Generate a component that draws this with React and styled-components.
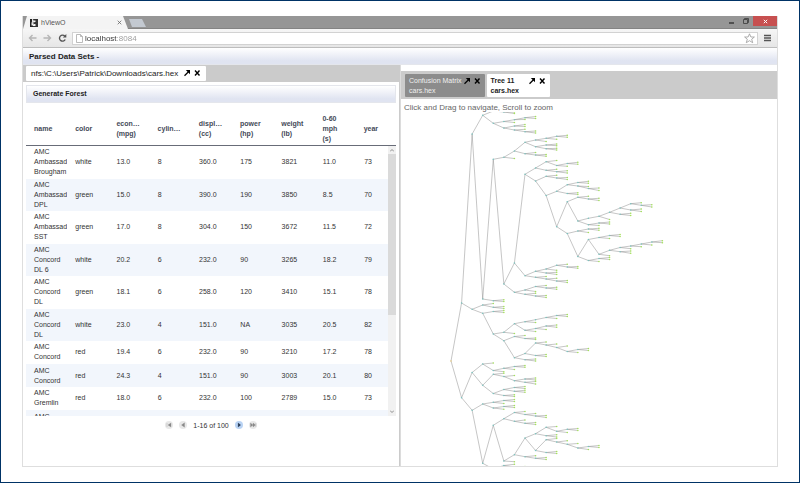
import React from 'react';
import styled, { createGlobalStyle, css } from 'styled-components';

const GlobalStyle = createGlobalStyle`
  * { box-sizing: border-box; }
  body { margin: 0; background: #fff; }
  body, button, input { font-family: 'Liberation Sans', Arial, sans-serif; }
  button { border: 0; padding: 0; margin: 0; background: none; color: inherit; }
  h2, p { margin: 0; }
`;

const Frame = styled.div`
  height: 100vh;
  border: 1px solid #003366;
  padding: 15px 21px;
  display: flex;
  background: #fff;
`;

const Browser = styled.div`
  flex: 1;
  min-width: 0;
  display: flex;
  flex-direction: column;
  border: 1px solid #dedede;
  border-top: 0;
`;

const TitleBar = styled.header`
  height: 13px;
  flex: none;
  display: flex;
  background: #969696;
  border-bottom: 1px solid #848484;
`;

const BrowserTab = styled.div`
  width: 105px;
  height: 13px;
  display: flex;
  align-items: center;
  gap: 3px;
  padding: 0 6px 0 7px;
  background: #f4f4f4;
  clip-path: polygon(0 100%, 4px 0, 100px 0, 100% 100%);
  font-size: 7px;
  color: #555;
`;

const TabTitle = styled.span`
  flex: 1;
  line-height: 12px;
`;

const NewTab = styled.button`
  width: 17px;
  height: 8px;
  margin: 3px 0 0 1px;
  background: #c3c9d1;
  clip-path: polygon(0 0, 13px 0, 100% 100%, 3px 100%);
`;

const WindowButtons = styled.div`
  margin-left: auto;
  display: flex;
  height: 10px;
`;

const WindowButton = styled.button`
  width: ${(p) => (p.$close ? 24 : 14)}px;
  display: grid;
  place-items: center;
  background: ${(p) => (p.$close ? '#c75050' : 'transparent')};
`;

const AddressRow = styled.div`
  height: 19px;
  flex: none;
  display: flex;
  align-items: center;
  gap: 5px;
  padding: 0 4px;
  background: linear-gradient(#f6f6f6, #e6e6e6);
  border-bottom: 1px solid #bdbdbd;
`;

const NavButton = styled.button`
  width: 10px;
  height: 10px;
  display: grid;
  place-items: center;
`;

const AddressBox = styled.div`
  flex: 1;
  height: 13px;
  display: flex;
  align-items: center;
  gap: 2px;
  padding: 0 2px 0 3px;
  background: #fff;
  border: 1px solid #d2d2d2;
`;

const Address = styled.input`
  flex: 1;
  min-width: 0;
  height: 11px;
  padding: 0;
  border: 0;
  outline: 0;
  font-size: 8px;
  line-height: 11px;
  color: transparent;
  background: linear-gradient(90deg, #333 32px, #999 32px);
  background-clip: text;
`;

const Bar = styled.div`
  height: 17px;
  flex: none;
  padding-left: 6px;
  font-size: 8px;
  line-height: 17px;
  font-weight: bold;
  color: #222;
  background: linear-gradient(#fff, #e0e4f1 80%);
  border: solid #e4e6ec;
  border-width: 0 0 1px;
  ${(p) => p.$boxed && css`
    height: 18px;
    border-width: 1px;
    line-height: 16px;
    font-size: 7px;
  `}
`;

const BarButton = styled.button`
  font: inherit;
`;

const Panels = styled.main`
  flex: 1;
  min-height: 0;
  display: grid;
  grid-template-columns: 1fr 1fr;
`;

const LeftPanel = styled.section`
  min-width: 0;
  min-height: 0;
  border-right: 1px solid #cbcbcb;
`;

const RightPanel = styled.section`
  min-width: 0;
  min-height: 0;
  display: flex;
  flex-direction: column;
  padding-top: 6px;
  border-left: 1px solid #dcdcdc;
`;

const TabStrip = styled.div`
  flex: none;
  display: flex;
  gap: 2px;
  background: #cbcbcb;
  padding: ${(p) => (p.$tall ? '3px 4px 2px' : '1px 3px')};
`;

const DataTab = styled.div`
  height: ${(p) => (p.$tall ? 23 : 15)}px;
  display: flex;
  align-items: flex-start;
  gap: ${(p) => p.$gap || 1}px;
  padding: ${(p) => (p.$tall ? '2px 4px' : '2px 5px')};
  border-radius: 1px;
  font-size: ${(p) => (p.$tall ? 7 : 8)}px;
  line-height: ${(p) => (p.$tall ? 10 : 11)}px;
  background: ${(p) => (p.$inactive ? '#8c8c8c' : '#fff')};
  color: ${(p) => (p.$inactive ? '#f0f0f0' : '#222')};
  white-space: pre-line;
`;

const TabActions = styled.div`
  display: flex;
  gap: 2px;
  color: #000;
  padding-top: 1px;
`;

const IconButton = styled.button`
  display: block;
  width: 8px;
  height: 8px;
  svg { display: block; }
`;

const Forest = styled.div`
  margin: 3px 3px 0;
`;

const Table = styled.table`
  width: 100%;
  table-layout: fixed;
  border-collapse: collapse;
  font-size: 7px;
  line-height: 10px;
  color: #333;
`;

const Column = styled.col`
  width: ${(p) => (p.$last ? 'auto' : '11.14%')};
`;

const BodyColumn = styled(Column)`
  width: ${(p) => (p.$last ? 'auto' : '11.4%')};
`;

const HeadCell = styled.th`
  height: 42px;
  padding: 9px 0 0 8px;
  text-align: left;
  vertical-align: middle;
  white-space: pre-line;
  overflow: hidden;
  color: #444a58;
`;

const HeadRule = styled.div`
  border-bottom: 1px solid #686c78;
`;

const BodyArea = styled.div`
  height: 270px;
  display: flex;
  overflow: hidden;
`;

const BodyRows = styled.div`
  flex: 1;
  height: 100%;
  overflow: hidden;
`;

const Row = styled.tr`
  &:nth-child(even) { background: #f2f6fc; }
  &:nth-child(even) td { padding-bottom: 1px; }
`;

const Cell = styled.td`
  height: 23px;
  padding: 1px 0 2px 8px;
  overflow: hidden;
  white-space: pre-line;
  vertical-align: middle;
`;

const ScrollTrack = styled.div`
  width: 8px;
  display: flex;
  flex-direction: column;
  align-items: center;
  justify-content: space-between;
  background: #f1f1f1;
  padding: 3px 0;
`;

const ScrollThumb = styled.div`
  width: 8px;
  height: 161px;
  margin: 2px 0 auto;
  background: #dadada;
`;

const Pager = styled.nav`
  display: flex;
  align-items: center;
  justify-content: center;
  gap: 6px;
  height: 18px;
  font-size: 7px;
  color: #333;
`;

const PageButton = styled.button`
  width: 8px;
  height: 8px;
  border-radius: 50%;
  display: grid;
  place-items: center;
  background: ${(p) => (p.$active ? '#b9d3f4' : '#e8e8e8')};
  color: ${(p) => (p.$active ? '#1c2c44' : '#888')};
`;

const Hint = styled.p`
  padding: 4px 3px 0;
  font-size: 8px;
  line-height: 9px;
  color: #666;
`;

const Canvas = styled.div`
  flex: 1;
  min-height: 0;
  overflow: hidden;
  svg { display: block; }
`;

const columns = ['name', 'color', 'econ…\n(mpg)', 'cylin…', 'displ…\n(cc)', 'power\n(hp)', 'weight\n(lb)', '0-60\nmph\n(s)', 'year'];

const cars = [
  ['AMC\nAmbassador\nBrougham', 'white', '13.0', '8', '360.0', '175', '3821', '11.0', '73'],
  ['AMC\nAmbassador\nDPL', 'green', '15.0', '8', '390.0', '190', '3850', '8.5', '70'],
  ['AMC\nAmbassador\nSST', 'green', '17.0', '8', '304.0', '150', '3672', '11.5', '72'],
  ['AMC\nConcord\nDL 6', 'white', '20.2', '6', '232.0', '90', '3265', '18.2', '79'],
  ['AMC\nConcord\nDL', 'green', '18.1', '6', '258.0', '120', '3410', '15.1', '78'],
  ['AMC\nConcord\nDL', 'white', '23.0', '4', '151.0', 'NA', '3035', '20.5', '82'],
  ['AMC\nConcord', 'red', '19.4', '6', '232.0', '90', '3210', '17.2', '78'],
  ['AMC\nConcord', 'red', '24.3', '4', '151.0', '90', '3003', '20.1', '80'],
  ['AMC\nGremlin', 'red', '18.0', '6', '232.0', '100', '2789', '15.0', '73'],
  ['AMC\nGremlin', '', '', '', '', '', '', '', ''],
];

// Each branch is [y, ...children]; a bare number is a leaf. Depth gives x.
const tree = [361,
  [303,
    [134,
      [115.3, [111, [112, 112, 113.5]],
        [123.3, [121.5, [119.7, [117.7, 116.5, 118.5], 119.5], 122.5],
          [128, [126, 124.5, 126.5], [130, 129.3, [131.7, 131, 133]]]]],
      [299,
        [159.3,
          [157.3,
            [151,
              [142.3, [140, [138.3, [136.3, 135.3, 137.3], 139.3], 141.5], [146.7, [145, 144, 145.7], [148.7, 148.3, 150]]],
              [153.7, 152.5, [155, 154.5, 156.3]]],
            158.5],
          [284,
            [263,
              [174.3,
                [168, [161.7, 160.5, [165.5, [163.5, 162.3, 164.3], 166.3]], [170.3, 169.3, [171.7, 170.7, 173]]],
                [181, [176.3, 175.3, [178, 177.5, 179.5]],
                  [195.5,
                    [191.3, [184.7, [182.5, 181.3, 183.3], [186, 186.5, [188.5, 188, 190.5]]], [193.5, 192.7, 194.5]],
                    [226.7,
                      [201.7, [197.3, 196.3, [199, 198.3, 200.5]],
                        [221,
                          [218.3, [216.3, [212.3, [208, [203.7, 202.7, [205.3, 204.7, 207]], [210, 209, 211.5]], [214.3, 213.3, 215.5]], 219.5]],
                          [224.7, [223, 222, 224], 225.5]]],
                      [233.5, [231, [229, 228.3, 230.3], 232.5],
                        [256.5,
                          [239.5, [237.5, [235.5, 234.5, 236.5], 238.5],
                            [254.3,
                              [250.3, [247.5, [246, [244, [242, 240.7, 242.7], 245], 246.7], 248.7], [251.7, 251, 253.3]],
                              255.7]],
                          [260.5, [258.5, 257.5, 259.5], 261.5]]]]]]],
              [275.7,
                [271.3, [269, [265.3, 264.3, [267, 266.5, 268.3]], 270.3], [273, 272.3, 274.5]],
                [277.3, 276.5, [279, 278.3, [281, 280.5, 282.5]]]]],
            [292.3, [290, [286.5, 285.5, [288, 287.3, 289.3]], 291.5], [294.3, 293.3, [296, 295.5, 297.5]]]]],
        [300.7, 299.7, 301.5]]],
    [309.3, [305, 303.5, [307.3, 306.5, 308.5]],
      [313.3, [311.5, 310.5, 312.5],
        [334,
          [332.3,
            [323.7, [321.7, [319.7, [317.5, [315.5, 314.5, 316.5], 318.5]], 322.5], [330.3, [328.5, [326, 325, 327.3], 329.5], 331.5]],
            333.5],
          [340.7, [336.5, 335.5, [338.5, 338, 339.5]],
            [357.7,
              [353.5, [343, 342, [345, 344, [347.5, 346, [351.5, [349.5, 348.5, 350.5], 352.5]]]], [355.5, 354.5, 356.5]],
              [359.7, 359, 361]]]]]]],
  [397.7,
    [372.5, [364, 363, [370.5, [368.3, [366.5, 365.5, 367.3], 369.5], 371.7]],
      [385.3,
        [374.3, 373.3, [376.5, 375.5, [380.7, [379, 378, 380], [382.3, 381.5, 384]]]],
        [393.5, [389.5, [387.5, 386.5, 388.5], [391.3, 390.3, 392.3]], [395.5, 394.7, 396.5]]]],
    [410.3, [404, [402.3, [400.5, 399.5, 401.5], 403.5], [408, [406.5, 405.5, 407.5], 409.3]],
      [463.3,
        [425.3,
          [418.7, [412.5, 411.5, [414.5, 413.5, [416, 415.5, 417.5]]], [421.3, 420, [423.3, 422.5, 424.5]]],
          [461,
            [454.7,
              [438,
                [433.7, [427.3, 426.5, [431.3, [429.3, 428.5, 430.5], 432.5]], [435.7, 434.7, 437]],
                [450.5, [439.7, 438.5, [442, 440.7, [444.3, 443.5, [448, [446.5, 445.5, 447.5], 449.5]]]], [452.5, 451.5, 453.5]]],
              [456.7, 455.7, [458.3, 457.5, 459.5]]],
            461.7]],
        [469, [465.5, 464.3, [467, 466.5, 468]], 472]]]],
];

const STEP = 10.57;

function collect(node, depth, out) {
  const leaf = typeof node === 'number';
  const y = (leaf ? node : node[0]) - 112;
  const x = 50 + depth * STEP;
  out.nodes.push({ x, y, kind: leaf ? 'leaf' : depth ? 'branch' : 'root' });
  if (!leaf) {
    node.slice(1).forEach((child) => {
      const cy = (typeof child === 'number' ? child : child[0]) - 112;
      out.edges.push(`M${x} ${y}L${x + STEP} ${cy}`);
      collect(child, depth + 1, out);
    });
  }
  return out;
}

const drawing = collect(tree, 0, { nodes: [], edges: [] });
const dotColor = { leaf: '#a4e25c', branch: '#7cc4c0', root: '#e8c87c' };

function TreeDrawing() {
  return (
    <svg width="377" height="356" role="img" aria-label="Decision tree">
      <path d={drawing.edges.join('')} fill="none" stroke="#8d8d8d" strokeWidth="0.5" />
      {drawing.nodes.map((n, i) => (
        <circle key={i} cx={n.x} cy={n.y} r="0.8" fill={dotColor[n.kind]} />
      ))}
    </svg>
  );
}

function Actions() {
  return (
    <TabActions>
      <IconButton aria-label="Open">
        <svg width="8" height="8" viewBox="0 0 8 8"><path d="M1.5 6.8 5.5 2.8" stroke="currentColor" strokeWidth="1.3" /><path d="M2.8 1H7v4.2z" fill="currentColor" /></svg>
      </IconButton>
      <IconButton aria-label="Close">
        <svg width="8" height="8" viewBox="0 0 8 8"><path d="M2 1.5 6.5 6.5M6.5 1.5 2 6.5" stroke="currentColor" strokeWidth="1.4" /></svg>
      </IconButton>
    </TabActions>
  );
}

const pageIcons = {
  First: 'M2 2v4M6 2 3 4l3 2z',
  Previous: 'M5.5 1.8 2.5 4l3 2.2z',
  Next: 'M3.2 2 5.6 4 3.2 6z',
  Last: 'M1.5 2 4 4 1.5 6zM4 2l2.5 2L4 6zM6.8 2v4',
};

function PageControl({ name, active }) {
  return (
    <PageButton $active={active} aria-label={name}>
      <svg width="8" height="8" viewBox="0 0 8 8"><path d={pageIcons[name]} fill="currentColor" stroke="currentColor" strokeWidth="0.3" /></svg>
    </PageButton>
  );
}

export default function App() {
  return (
    <Frame>
      <GlobalStyle />
      <Browser>
        <TitleBar>
          <BrowserTab>
            <svg width="8" height="8" viewBox="0 0 8 8"><path d="M0 0h2v2.5L1.5 4v2.5H3V8H0z" fill="#222" /><path d="M3 0h5v8H3V7h2.5V5H3.5L3 3.5 5.5 3V1.5H3z" fill="#333" /><path d="M2 .5 3.5 1 2.5 4 4 6" stroke="#bbb" strokeWidth=".7" fill="none" /></svg>
            <TabTitle>hViewO</TabTitle>
            <svg width="5" height="5" viewBox="0 0 5 5"><path d="M.7.7l3.6 3.6M4.3.7.7 4.3" stroke="#666" strokeWidth=".8" /></svg>
          </BrowserTab>
          <NewTab aria-label="New tab" />
          <WindowButtons>
            <WindowButton aria-label="Minimize"><svg width="6" height="6"><path d="M0 5h5" stroke="#222" strokeWidth="1.2" /></svg></WindowButton>
            <WindowButton aria-label="Restore"><svg width="6" height="6"><path d="M1.5 1.5V.5h4v4h-1M.5 1.5h4v4h-4z" fill="none" stroke="#444" strokeWidth=".9" /></svg></WindowButton>
            <WindowButton $close aria-label="Close window"><svg width="5" height="5"><path d="M.8.8l3.4 3.4M4.2.8.8 4.2" stroke="#fff" /></svg></WindowButton>
          </WindowButtons>
        </TitleBar>
        <AddressRow>
          <NavButton aria-label="Back"><svg width="9" height="8"><path d="M8.5 4H1.5M4.5 1 1.5 4l3 3" fill="none" stroke="#b5b5b5" strokeWidth="1.4" /></svg></NavButton>
          <NavButton aria-label="Forward"><svg width="9" height="8"><path d="M.5 4h7M4.5 1l3 3-3 3" fill="none" stroke="#b5b5b5" strokeWidth="1.4" /></svg></NavButton>
          <NavButton aria-label="Reload"><svg width="9" height="8"><path d="M6.8 2.2A3 3 0 1 0 7.2 5.5" fill="none" stroke="#555" strokeWidth="1.4" /><path d="M8.3 0v3.6H4.8z" fill="#555" /></svg></NavButton>
          <AddressBox>
            <svg width="7" height="9"><path d="M.5.5h4l2 2v6h-6zM4.5.5v2h2" fill="none" stroke="#aaa" strokeWidth=".8" /></svg>
            <Address type="text" aria-label="Address" defaultValue="localhost:8084" />
            <svg width="11" height="11" viewBox="0 0 11 11"><path d="M5.5.8 6.9 4h3.5L7.7 6.2l1 3.5-3.2-2-3.2 2 1-3.500L.6 4h3.500z" fill="#fff" stroke="#999" strokeWidth=".8" /></svg>
          </AddressBox>
          <NavButton aria-label="Menu"><svg width="8" height="8"><path d="M0 1.5h7M0 4h7M0 6.500h7" stroke="#555" strokeWidth="1.5" /></svg></NavButton>
        </AddressRow>
        <Bar><BarButton>Parsed Data Sets -</BarButton></Bar>
        <Panels>
          <LeftPanel>
            <TabStrip>
              <DataTab $gap={5}>
                <span>nfs:\C:\Users\Patrick\Downloads\cars.hex</span>
                <Actions />
              </DataTab>
            </TabStrip>
            <Forest>
              <Bar $boxed><BarButton>Generate Forest</BarButton></Bar>
              <HeadRule>
                <Table>
                  <colgroup>{columns.map((c, i) => <Column key={c} $last={i === columns.length - 1} />)}</colgroup>
                  <thead><tr>{columns.map((c) => <HeadCell key={c} scope="col">{c}</HeadCell>)}</tr></thead>
                </Table>
              </HeadRule>
              <BodyArea>
                <BodyRows>
                  <Table>
                    <colgroup>{columns.map((c, i) => <BodyColumn key={c} $last={i === columns.length - 1} />)}</colgroup>
                    <tbody>
                      {cars.map((car, i) => (
                        <Row key={i}>{car.map((v, j) => <Cell key={j}>{v}</Cell>)}</Row>
                      ))}
                    </tbody>
                  </Table>
                </BodyRows>
                <ScrollTrack>
                  <svg width="4" height="3"><path d="M0 2.5 2 .5l2 2" fill="none" stroke="#777" strokeWidth=".8" /></svg>
                  <ScrollThumb />
                  <svg width="4" height="3"><path d="M0 .5l2 2 2-2" fill="none" stroke="#777" strokeWidth=".8" /></svg>
                </ScrollTrack>
              </BodyArea>
              <Pager aria-label="Pages">
                <PageControl name="First" />
                <PageControl name="Previous" />
                <span>1-16 of 100</span>
                <PageControl name="Next" active />
                <PageControl name="Last" />
              </Pager>
            </Forest>
          </LeftPanel>
          <RightPanel>
            <TabStrip $tall>
              <DataTab $tall $inactive><span>{'Confusion Matrix\ncars.hex'}</span><Actions /></DataTab>
              <DataTab $tall $gap={9}><b>{'Tree 11\ncars.hex'}</b><Actions /></DataTab>
            </TabStrip>
            <Hint>Click and Drag to navigate, Scroll to zoom</Hint>
            <Canvas><TreeDrawing /></Canvas>
          </RightPanel>
        </Panels>
      </Browser>
    </Frame>
  );
}
